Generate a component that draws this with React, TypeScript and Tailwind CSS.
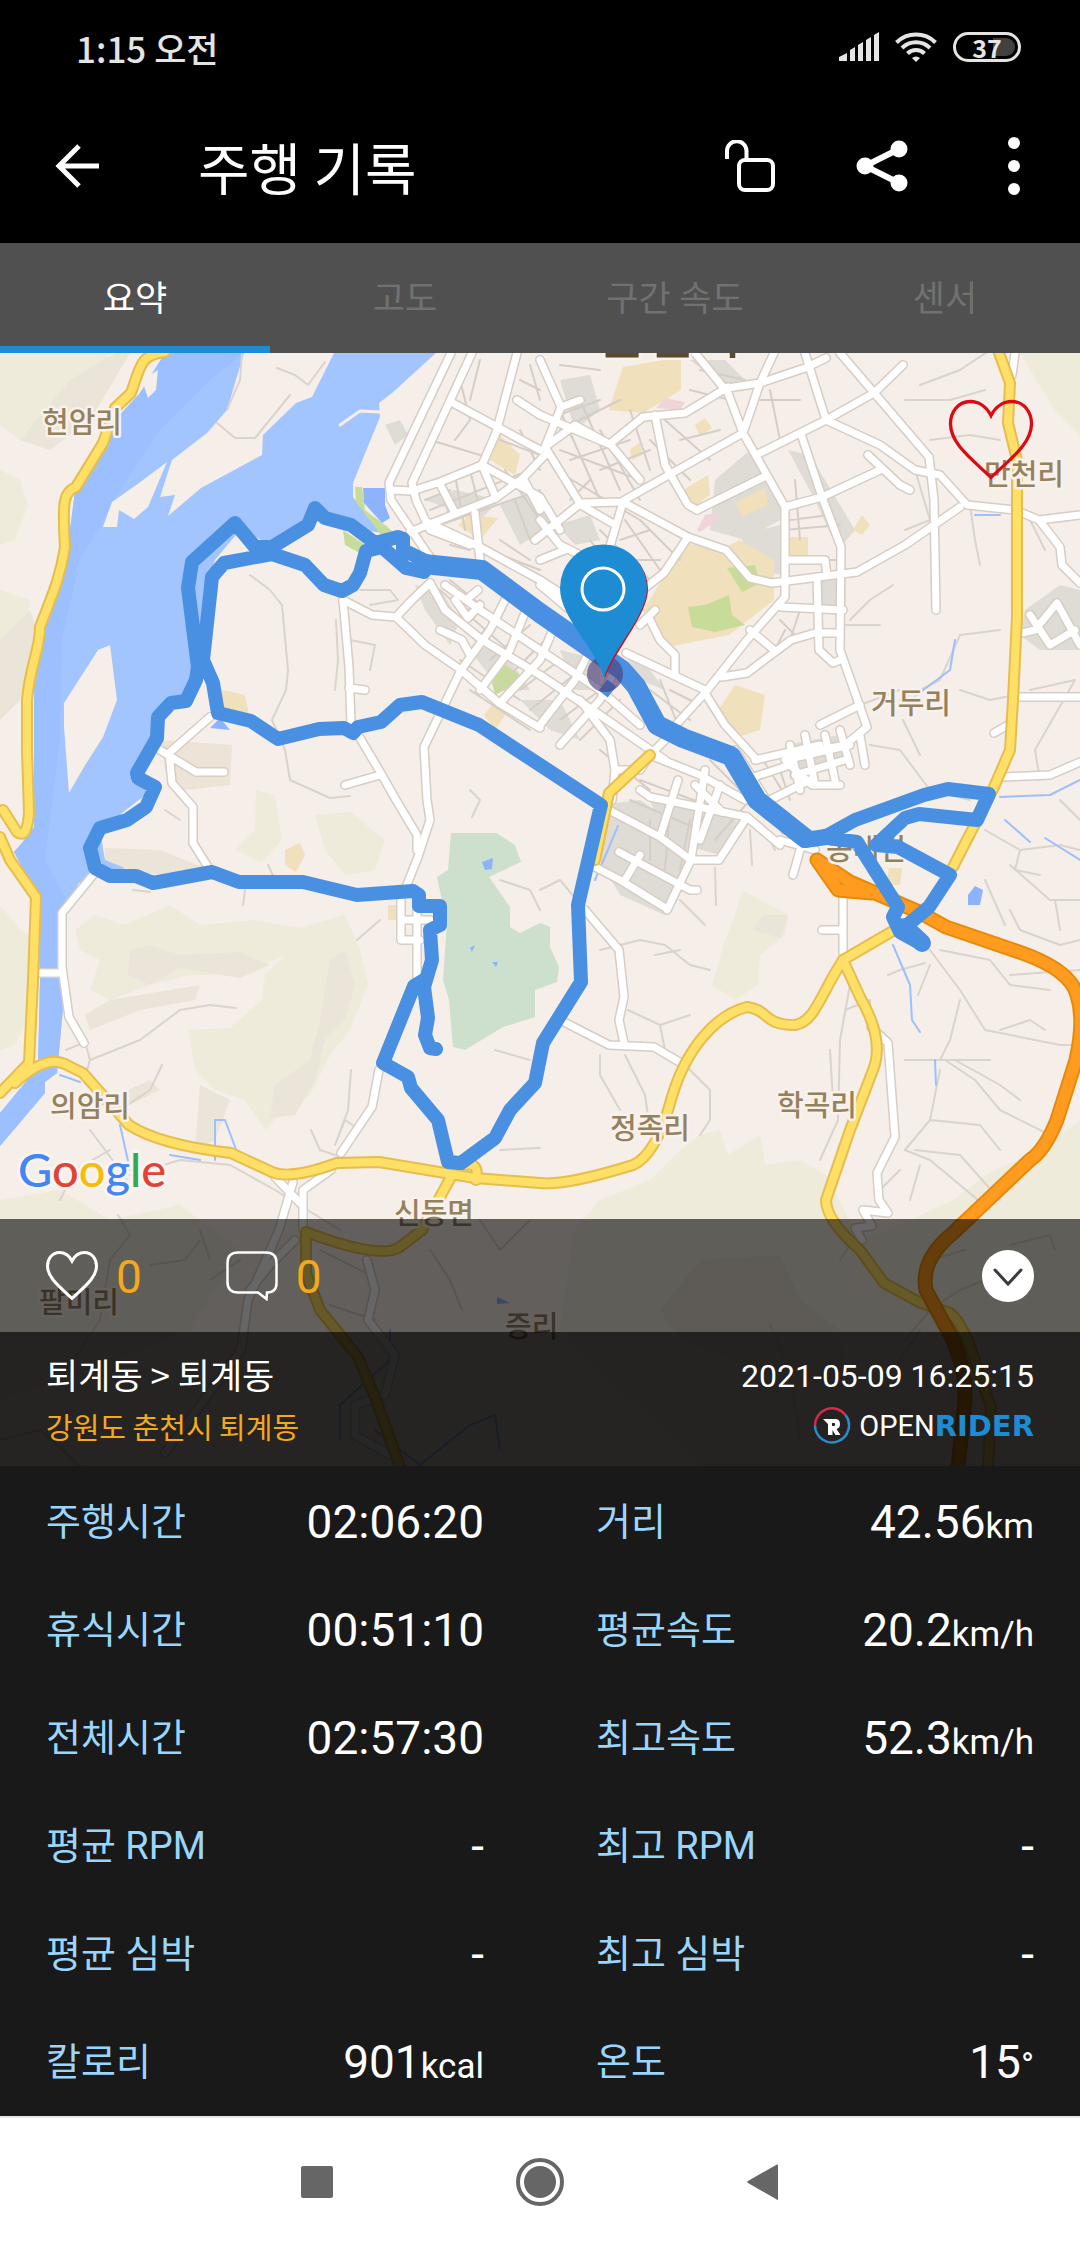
import { useState } from "react";

const tabs = ["요약", "고도", "구간 속도", "센서"];

const stats = [
  { label: "주행시간", value: "02:06:20" },
  { label: "거리", value: "42.56", unit: "km" },
  { label: "휴식시간", value: "00:51:10" },
  { label: "평균속도", value: "20.2", unit: "km/h" },
  { label: "전체시간", value: "02:57:30" },
  { label: "최고속도", value: "52.3", unit: "km/h" },
  { label: "평균 RPM", value: "-" },
  { label: "최고 RPM", value: "-" },
  { label: "평균 심박", value: "-" },
  { label: "최고 심박", value: "-" },
  { label: "칼로리", value: "901", unit: "kcal" },
  { label: "온도", value: "15", unit: "°" },
];

const places = [
  { name: "현암리", x: 42, y: 433 },
  { name: "만천리", x: 984, y: 485 },
  { name: "거두리", x: 871, y: 714 },
  { name: "동내면", x: 826, y: 860 },
  { name: "의암리", x: 50, y: 1117 },
  { name: "신동면", x: 394, y: 1224 },
  { name: "정족리", x: 610, y: 1139 },
  { name: "학곡리", x: 777, y: 1116 },
  { name: "팔미리", x: 39, y: 1313 },
  { name: "증리", x: 505, y: 1337 },
];

const hills = [
  "M0 353H110L85 400 60 430 20 440 0 425Z",
  "M0 470 20 480 28 505 15 540 0 545Z",
  "M0 590 30 600 20 650 5 680 0 690Z",
  "M75 930 95 915 125 925 170 905 200 925 255 920 300 928 345 915 360 950 368 985 350 1030 330 1055 310 1095 285 1110 265 1130 245 1100 215 1090 195 1070 188 1030 230 1028 262 1000 265 975 285 955 240 975 190 975 150 985 110 1000 90 990 100 960 80 950Z",
  "M315 815 350 812 385 840 375 870 345 875 325 850Z",
  "M256 790 275 795 282 840 262 862 235 850 255 830Z",
  "M0 905 20 930 38 940 35 1000 15 1045 0 1050Z",
  "M742 890 788 915 785 935 760 955 758 985 735 1000 712 985 725 940 735 915Z",
  "M1020 353H1080V435L1055 410Z",
  "M574 1230 600 1200 650 1180 680 1150 700 1135 720 1130 728 1155 760 1135 765 1165 800 1160 826 1175 860 1240 900 1225 953 1200 990 1172 1040 1150 1080 1120V1466H700L560 1330Z",
  "M0 1200 60 1190 110 1220 180 1205 240 1250 190 1330 90 1370 0 1400Z",
];

const ridges = [
  "M130 950 150 945 180 955 240 952 270 965 240 978 180 968 150 985 128 975Z",
  "M330 960 345 950 355 985 345 1020 325 1040 315 1080 295 1115 270 1118 275 1085 310 1060 320 1020Z",
  "M105 848 160 850 205 868 190 880 140 872 105 862Z",
  "M85 1015 110 1000 200 985 195 1000 140 1010 90 1030Z",
  "M95 1105 150 1080 160 1090 120 1110Z",
  "M200 1085 230 1100 215 1140 195 1150Z",
  "M763 915 788 915 780 938 752 930Z",
  "M660 1310 700 1260 780 1255 800 1300 840 1330 850 1380 760 1370 680 1340Z",
  "M0 640 30 610 40 640 20 700 0 720Z",
  "M20 440 70 380 115 353 130 353 90 420 50 450Z",
];

const blocks = [
  "M425 500 455 490 500 500 480 520Z",
  "M500 505 540 490 560 520 520 545Z",
  "M415 585 440 590 460 620 450 645 425 610Z",
  "M470 650 500 645 530 690 500 690Z",
  "M520 700 560 700 580 740 550 730Z",
  "M560 650 600 660 600 690 575 690Z",
  "M625 655 650 670 665 690 640 680Z",
  "M600 805 640 800 700 840 665 915 620 895 600 860Z",
  "M650 800 690 800 745 825 720 855 665 840Z",
  "M715 480 750 450 780 500 780 520 745 540 710 530Z",
  "M740 535 780 525 782 575 755 570Z",
  "M788 450 810 455 855 530 838 550 815 500Z",
  "M820 580 836 580 838 610 822 610Z",
  "M690 360 725 360 750 385 730 390Z",
  "M1025 610 1060 585 1080 590 1080 650 1040 650 1020 635Z",
  "M560 380 590 375 600 410 575 430Z",
  "M557 525 590 515 600 540 575 545Z",
  "M785 745 840 735 850 760 790 780Z",
  "M385 425 400 420 408 435 395 445Z",
];

const sands = [
  "M490 460 500 435 520 455 515 475Z",
  "M458 525 470 515 498 518 480 540Z",
  "M609 410 623 367 681 357 681 390 643 413Z",
  "M685 543 720 550 740 540 774 560 774 600 729 635 667 647 643 610 665 575Z",
  "M683 490 708 475 710 495 690 510Z",
  "M736 502 765 488 768 505 742 517Z",
  "M790 537H808V560H790Z",
  "M715 715 735 685 765 695 760 730 735 738Z",
  "M853 530 862 515 870 525 862 535Z",
  "M484 715 500 695 505 715 495 730Z",
  "M695 425 705 418 712 428 700 436Z",
  "M630 450 640 442 642 455 632 460Z",
  "M222 690 245 695 250 720 222 712Z",
  "M285 850 300 843 305 855 296 872 285 865Z",
  "M889 868 902 868 900 885 886 885Z",
  "M388 905H398V920H388Z",
];

const greens = [
  "M688 607 705 605 729 595 732 615 745 625 715 632 692 627Z",
  "M727 568 755 565 760 583 742 592Z",
  "M355 487 362 487 365 510 385 525 397 535 385 540 356 502Z",
  "M490 675 505 665 520 675 508 688 495 695Z",
  "M343 530 365 545 360 553 345 545Z",
];

// rural lanes, drawn as thin grey strokes
const lanes = [
  "M242 353 245 370 227 410 M277 368 295 375 308 385 325 365 M217 423 235 438 255 440 290 400 M308 355 330 360",
  "M250 575 270 590 282 605 288 670 286 690 272 720 285 750 290 780 330 798 350 796",
  "M336 620 338 660 335 690 M350 640 375 645 370 670 M360 590 390 590 398 600 370 605",
  "M165 810 180 820 M133 890 150 892 M268 865 275 880 M245 890 243 905 M357 940 380 920",
  "M66 1050 85 1042 90 1060 140 1040 180 1010 210 1005 236 1008 M90 1060 84 1080 120 1110 150 1090 162 1065",
  "M90 1130 120 1170 130 1185 M110 1150 75 1170 60 1200 M130 1175 180 1160 230 1165 275 1190 340 1230",
  "M311 1130 320 1150 350 1160 M351 1070 348 1110 335 1145 345 1120 360 1130",
  "M470 790 480 800 472 817 M500 880 530 890 540 910 M495 1050 530 1060 M500 1150 540 1148",
  "M600 950 640 940 665 945 690 965 710 970 M655 955 680 950 M628 1010 660 1025 665 1050 M660 1025 690 1015",
  "M600 1055 600 1075 620 1110 M625 1055 645 1095 650 1130 M685 1065 710 1090 710 1120 700 1135",
  "M540 890 560 880 585 910 M715 868 716 905 M680 900 705 925 M750 830 752 865 M770 840 775 850",
  "M850 985 840 1040 838 1120 820 1160 M830 1050 833 1100 M845 1010 870 1000 870 1020 M888 975 900 970 925 963",
  "M930 950 960 990 985 1030 1060 1045 1080 1045 M960 1000 950 1040 940 1060 M905 1060 945 1060 990 1060 M930 965 918 995",
  "M940 950 990 960 1010 985 1050 990 M1010 975 1080 970 M1000 1030 1030 1020 1045 1030",
  "M945 1060 975 1080 1000 1110 1050 1135 M940 1070 930 1120 980 1125 1000 1150 M930 1120 905 1150 M955 1060 1000 1085 1020 1100",
  "M905 1150 930 1160 990 1210 M915 1150 960 1155 1000 1200 M900 1170 880 1190 M920 1165 910 1200",
  "M985 830 1020 850 1060 845 1080 850 M1060 800 1080 820 M1020 850 1015 870 1040 875 M1010 865 1050 900 1080 900",
  "M1010 910 1020 930 1060 945 1080 940 M1055 900 1060 930 M985 880 1005 925",
  "M920 385 960 370 990 350 M905 400 950 400 985 390 M930 440 970 435 1000 440 M915 470 930 520 905 530",
  "M850 620 870 600 893 585 M845 625 880 625 M860 705 900 690 M870 745 900 750 930 790 970 800 M903 720 920 755",
  "M1000 630 960 635 940 680 900 700 M1030 690 1075 680 1035 750 1040 780 M960 690 990 700 1015 695",
  "M970 505 975 540 980 565 M1030 520 1045 550",
  "M430 1250 450 1280 462 1310 M480 1220 500 1250 530 1220 M200 1230 210 1260 M150 1265 185 1260 200 1240",
  "M118 1215 130 1235 110 1260 100 1320 60 1380 M210 1280 240 1260 M320 1250 370 1275 M330 1305 375 1320",
  "M905 1340 930 1310 960 1290 985 1280 M840 1260 850 1245 M920 1290 930 1260 965 1250 M1010 1245 1050 1235 1055 1250",
  "M770 1325 790 1370 800 1440 M900 1360 920 1330 M0 1440 40 1430 80 1466",
];

const cityLanes = [
  "M430 510 530 470 M440 525 540 490 M450 535 540 570 M455 475 465 530 M440 480 450 520 M470 470 480 510",
  "M425 500 450 490 M505 470 540 520 M515 500 530 540 M500 540 530 560 M450 545 470 550 M520 380 540 390 M530 365 540 400",
  "M460 380 470 420 455 440 M480 360 470 400 M430 440 480 455 M500 440 540 455 M520 430 540 470",
  "M560 450 640 480 M555 470 640 520 M560 410 600 500 M580 400 620 490 M600 430 640 500 M545 420 600 400",
  "M560 430 620 400 M570 460 630 440 M600 470 650 450 M590 480 570 500 M630 410 650 470 M560 365 600 370",
  "M640 520 680 560 M625 520 660 570 M600 530 650 580 M650 440 690 480 M665 420 710 460 M680 440 720 430",
  "M620 540 650 530 M610 560 660 560 M590 540 620 580 M610 590 640 570 M590 560 610 600",
  "M700 370 745 380 M690 390 730 400 M760 400 800 400 M770 390 780 440 M790 520 830 515 M795 480 800 540 M785 530 840 525",
  "M440 590 520 660 M450 580 530 645 M455 620 480 600 M475 640 505 610 M490 660 530 625 M505 680 545 640",
  "M520 690 560 660 M530 710 580 670 M460 660 520 700 M470 690 530 730 M560 720 600 690 M580 740 620 700",
  "M600 750 650 790 M615 730 670 760 M630 800 700 830 M640 780 720 810 M650 820 650 860 M670 810 665 870 M690 820 680 870",
  "M700 770 745 800 M710 760 740 790 M715 840 750 800 M780 620 800 640 M785 630 770 660 M800 610 790 640 M840 560 810 560",
  "M650 690 690 720 M660 680 680 730 M670 690 700 705 M640 690 670 730 M745 760 770 800 M760 755 785 795 M780 770 790 800",
];

const streets = [
  "M451 353 389 483 391 500 427 553 440 570",
  "M472 353 412 483 416 500 430 530 470 545",
  "M517 353 496 433 482 465 440 482 412 491 391 490",
  "M451 402 540 450 M517 400 540 415 M482 465 496 498 M440 484 455 513",
  "M410 532 440 520 496 498 523 478 545 455",
  "M427 522 480 547 540 580 590 612 M475 513 480 560 M482 465 540 497 560 530 M523 478 540 510",
  "M540 360 561 407 545 447 581 505 612 523 M545 447 575 425 611 445 640 480 M540 415 611 445",
  "M535 540 581 503 621 502 743 433 728 393 695 353 M561 407 580 400",
  "M743 433 760 383 774 353 M728 388 760 383 805 368 826 358",
  "M611 443 643 417 685 413 728 387 M655 415 665 465 688 505 697 510",
  "M743 433 785 507 785 597 747 640 705 693 674 727",
  "M805 353 826 420 880 445 915 470 940 475 967 505 1015 510",
  "M1015 510 1039 520 1060 547 1062 565 1080 583 M1039 520 1080 515",
  "M840 353 929 457 934 500 936 610",
  "M760 453 826 420 874 393 903 365",
  "M802 437 822 497 841 547 840 650 867 727 845 745 820 750",
  "M623 502 688 537 726 550 750 578 772 583 857 572 905 545 960 507",
  "M688 537 664 573 626 603 M623 502 603 570 M697 510 764 477 M785 507 822 497 880 470",
  "M781 607 843 610 M817 577 819 650 833 663 840 660 M785 560 825 560 827 575",
  "M750 630 774 650 M835 633 815 633 791 640 747 673 722 677",
  "M705 693 725 725 757 760 M626 653 705 690 M650 620 660 640 675 655 675 675 M640 625 655 610",
  "M343 600 349 667 351 723 379 770 396 800 417 835 417 850",
  "M343 600 372 615 396 617 412 600 430 583 M396 617 425 645 461 670 499 703 540 728",
  "M349 688 365 690 M345 785 380 775",
  "M461 670 424 747 427 800 430 820 418 857 406 887",
  "M417 893 417 980 M401 895V940H420 M401 920H430",
  "M379 1070 372 1107 341 1153 M331 1170 303 1190 303 1230",
  "M275 1177 300 1203 M293 1182 279 1230 248 1300 241 1350 165 1453",
  "M295 1240 270 1265 250 1290 M367 1260 375 1290 368 1320 395 1355 385 1395 355 1405 355 1435 390 1455",
  "M210 717 169 753 172 783 193 807 193 843 208 867 M160 750 196 772 224 772",
  "M93 875 62 913 62 967 69 1017 84 1043 M38 973H62",
  "M430 583 445 610 482 640 540 675 600 715 665 760",
  "M445 585 480 610 540 650 600 690 640 725",
  "M455 600 468 618 480 605 M440 630 462 640 470 655 M466 600 478 590",
  "M461 670 490 630 510 590 M480 690 510 650 530 600 M500 703 540 660 555 625 M540 725 575 680 590 650",
  "M560 745 600 700 615 670 M580 700 610 740 615 770 640 770 650 755 665 740 M615 770 612 800",
  "M540 520 560 545 590 560 M540 560 565 550 M590 612 620 590 M540 585 570 610",
  "M650 755 700 775 745 800 M678 780 660 837 M705 770 691 860 M609 810 660 837 691 860 719 860 747 817",
  "M650 797 747 817 780 845 M640 790 650 797 M691 860 667 910 M595 867 620 880 664 907 M619 852 690 890 697 890",
  "M640 855 625 880 M780 840 815 850 M800 850 793 875 M695 785 722 812 M720 785 700 840",
  "M735 750 785 830 M755 760 820 745 M770 800 810 780 M745 780 790 765 812 785 840 785",
  "M790 745 800 790 M805 735 815 785 M825 735 835 780 M840 730 850 765 M785 760 850 745 M795 775 845 760 M820 725 860 705 M860 735 865 765",
  "M843 897 843 953 M822 930 843 930",
  "M871 1027 888 1043 895 1137 877 1173 879 1200 888 1213 863 1210 872 1226 855 1228 862 1240",
  "M585 910 619 950 624 997 619 1020 624 1043 M564 1022 609 1045 654 1047 681 1063",
  "M1022 633 1035 630 1057 603 1080 645 M1030 615 1050 645 1075 630",
  "M1019 697H1080 M1003 777 1050 775 1080 762 M994 733 1008 725",
  "M1015 353 1012 375 M868 455 900 485 910 490",
];

const yellowRoads = [
  "M165 352C140 355 141 365 131 393L115 408 103 443 76 487C64 492 62 500 65 547C60 580 50 600 40 627C40 650 30 665 27 700V750L29 813Q27 840 17 832L3 810",
  "M0 837 10 860 36 897 33 980 29 1063 0 1093",
  "M15 1083Q45 1055 65 1064L83 1073 129 1125Q160 1145 231 1153L272 1172Q290 1180 337 1163L379 1162 475 1178 540 1183Q565 1186 633 1165 656 1155 671 1100C685 1050 715 1015 747 1007 770 1010 762 1025 795 1025 815 1022 820 995 843 960L891 932",
  "M843 960 860 997Q885 1040 873 1070L850 1130 826 1200Q826 1220 860 1250L884 1283 919 1302 950 1313Q965 1325 977 1367L991 1407 988 1467",
  "M998 350 1010 383 1008 423 1017 460V617L1013 700 1010 750 994 787 953 867",
  "M650 755 609 793 595 860",
  "M476 1180Q480 1162 465 1165M451 1177 422 1230 400 1247Q380 1260 306 1232V1273L320 1310 358 1357 375 1397 400 1467",
];

const orangeRoad =
  "M817 860 838 890 871 893 M817 860 850 882 919 912 946 927 1022 953Q1070 970 1077 995 1085 1020 1076 1060L1057 1120Q1045 1150 1030 1160L953 1233Q920 1260 926 1290L953 1340Q966 1370 965 1400L958 1467";

const trackThin =
  "M403 539 398 537 375 543 351 525 325 518 315 508 308 525 272 547 255 547 235 523 192 562 188 588 198 667 196 680 186 701 171 703 158 717 157 738 137 773 138 778 155 787 146 807 127 820 100 828 90 848 95 868 110 876 136 876 153 883 212 872 239 882 303 882 357 895 413 891 419 895 419 906 440 906 440 925 430 930 432 960 424 987 428 1018 425 1035 430 1048 436 1049" +
  "M424 980 414 986 383 1063 408 1077 411 1088 438 1120 448 1162 461 1163 495 1138 510 1110 535 1083 543 1043 581 982 578 905 601 805 479 725 422 702 400 705 381 722 358 727 353 733 344 728 319 729 278 739 251 721 218 713 213 683 203 660 212 577 224 563 272 554 305 565 324 585 342 591 353 585 360 573 366 551 382 547" +
  "M820 838 828 835 855 820 924 795 948 789 989 794 977 820 919 814 905 818 876 845 898 847 950 875 929 907 905 927 M828 838 857 842 898 907 893 917 900 932 920 943";

const trackWide = "M424 564 482 570 540 613 622 670 636 686 657 725 683 738 731 756 757 800 805 838";

function RideMap() {
  return (
    <svg
      viewBox="0 353 1080 1113"
      className="block w-full"
      role="img"
      aria-label="주행 경로 지도"
      fill="none"
      strokeLinejoin="round"
      strokeLinecap="round"
    >
      <rect y="353" width="1080" height="1113" fill="#f6eee8" />
      <g fill="#efebdb">
        {hills.map((d) => (
          <path key={d} d={d} />
        ))}
      </g>
      <g fill="#ebe4d8">
        {ridges.map((d) => (
          <path key={d} d={d} />
        ))}
      </g>
      <path
        fill="#ede3d6"
        d="M160 740 232 745 230 785 185 790 165 770Z"
      />

      {/* river and islands */}
      <path
        fill="#a3c5ff"
        d="M165 353 140 393 115 420 75 490 73 507 69 537 52 590 44 640 34 683V827L22 843 14 852 38 897 40 980 38 1067 0 1113V1146L45 1093V1082L57 1073 64 997 57 947 59 920 79 883 125 868 105 860 100 830 148 793 137 773 157 738 158 717 186 701 200 670 203 600 215 560 240 530 272 545 310 520 344 527 382 533 353 497V483L380 417 379 403 392 393 436 353Z"
      />
      <path
        fill="#9cc0ff"
        d="M165 353 140 393 115 420 75 490 73 507 69 537 52 590 44 640 34 683V827L22 843 14 852 38 897 40 980 38 1067 0 1113V1146L45 1093V1082L57 1073 64 997 57 947 59 920 66 900 45 860 60 740 62 640 80 560 120 490 160 430 210 380 244 353Z"
      />
      <g fill="#f6eee8">
        <path d="M244 353 227 410 207 433 172 460 160 497 175 495 168 516 201 488 262 455 263 435 296 403 312 397 334 353Z" />
        <path d="M167 462 139 483 112 502 103 527H117L119 510 134 519 148 507Z" />
        <path d="M110 645 98 650 64 703V727L69 793 84 767 103 737 117 700Z" />
        <path d="M142 380 158 370 156 390 148 398Z" />
      </g>
      <path d="M340 425 360 411 380 412" stroke="#f6eee8" strokeWidth="3" />
      <path d="M242 353 240 380 227 410 M277 368 295 375 308 385 325 362 M217 423 235 438 255 438 290 395" stroke="#d9d4cc" strokeWidth="2" />

      <g fill="#dfdbd5">
        {blocks.map((d) => (
          <path key={d} d={d} />
        ))}
      </g>
      <g fill="#f0e0bb">
        {sands.map((d) => (
          <path key={d} d={d} />
        ))}
      </g>
      <path fill="#f0d4da" d="M697 530 705 515 720 512 715 522 700 532ZM656 408 665 398 685 402 680 410Z" />
      <g fill="#c7dc98">
        {greens.map((d) => (
          <path key={d} d={d} />
        ))}
      </g>
      <g fill="#8db3ff">
        <path d="M363 488H385V505L390 518 382 523 364 503Z" />
        <path d="M210 728 220 718 230 730Z" />
        <path d="M968 895 975 886 983 890 980 905 968 905Z" />
        <path d="M497 1297 510 1303 497 1304Z" />
      </g>
      <path
        fill="#cddfcd"
        d="M451 833 496 833 515 845 521 862 489 877 510 907V927L520 933 540 923 550 927V947L559 967 557 982 535 990 535 1017 503 1027 465 1050 453 1047 449 1000 443 980 447 923 437 877 448 870Z"
      />
      <path fill="#8db3ff" d="M482 862 493 858 492 869 485 870ZM470 948 475 945 472 952ZM492 962 498 962 496 967Z" />

      <g stroke="#d9d4cc" strokeWidth="2">
        {lanes.slice(1).map((d) => (
          <path key={d} d={d} />
        ))}
      </g>
      <g stroke="#d5cec7" strokeWidth="2">
        {cityLanes.map((d) => (
          <path key={d} d={d} />
        ))}
      </g>
      <path
        stroke="#9dc0fb"
        strokeWidth="2"
        d="M1000 797 1050 795 1080 780 M1005 820 1030 842 M1045 838 1080 860 M893 945 910 985 912 1020 920 1032 M935 1060 936 1085 M215 1160 215 1120 225 1120 240 1160 M60 1075 80 1082 M120 1125 130 1170 M955 640 950 670 910 700 M975 515 1000 515 M618 826 595 880 M170 1155 200 1160 M390 1330 390 1360 340 1405 340 1440 M375 1430 420 1465 470 1425 495 1415 500 1450"
      />

      <g stroke="#d6cdc4" strokeWidth="10">
        {streets.map((d) => (
          <path key={d} d={d} />
        ))}
      </g>
      <g stroke="#ffffff" strokeWidth="7">
        {streets.map((d) => (
          <path key={d} d={d} />
        ))}
      </g>
      <g stroke="#e6bd4f" strokeWidth="12">
        {yellowRoads.map((d) => (
          <path key={d} d={d} />
        ))}
      </g>
      <g stroke="#ffe066" strokeWidth="8">
        {yellowRoads.map((d) => (
          <path key={d} d={d} />
        ))}
      </g>
      <path d={orangeRoad} stroke="#e58a0c" strokeWidth="15" />
      <path d={orangeRoad} stroke="#ff9c1f" strokeWidth="11" />

      <g
        className="font-['Noto_Sans_CJK_KR',sans-serif] text-[29px] font-medium"
        fill="#94825f"
        stroke="#f8f1ec"
        strokeWidth="5"
        paintOrder="stroke"
      >
        {places.map((place) => (
          <text key={place.name} x={place.x} y={place.y}>
            {place.name}
          </text>
        ))}
        <text x="598" y="354" className="text-[52px]" fill="#5c4a2c">
          춘천시
        </text>
      </g>

      <g stroke="#4a90e2">
        <path d={trackThin} strokeWidth="14" />
        <path d="M382 547 406 568 424 572 M403 539 403 550 430 563" strokeWidth="14" />
        <path d={trackWide} strokeWidth="20" />
        <path d="M805 840 826 837" strokeWidth="16" />
        <path d="M905 927 922 943" strokeWidth="18" />
        <path d="M603 685 612 692" strokeWidth="14" strokeLinecap="butt" />
      </g>

      {/* start and finish pins */}
      <circle cx="605" cy="674" r="18" fill="#4b3f78" fillOpacity="0.65" />
      <path d="M605 678C598 650 563 620 563 589A42 42 0 0 1 648 589C648 615 615 650 605 678Z" fill="#c8141e" />
      <path d="M604 678C596 648 560 618 560 588A43 43 0 0 1 647 588C647 616 612 650 604 678Z" fill="#1d8cd2" />
      <circle cx="603" cy="589" r="21" stroke="#ffffff" strokeWidth="3" />
    </svg>
  );
}

function HeartIcon({ className }: { className: string }) {
  return (
    <svg viewBox="0 0 52 49" className={className} fill="none" stroke="currentColor" aria-hidden="true">
      <path d="M26 10C23 4 18 1.500 13.500 1.500C6 1.500 1.500 8 1.500 15C1.500 27 14 36 26 47.500C38 36 50.500 27 50.500 15C50.500 8 46 1.500 38.500 1.500C34 1.500 29 4 26 10Z" />
    </svg>
  );
}

function StatusBar() {
  return (
    <div className="flex h-[94px] items-center justify-between pr-[59px] pl-[76px] text-[#e4e4e4]">
      <span className="font-['Noto_Sans_CJK_KR',sans-serif] text-[35px] leading-none font-medium">1:15 오전</span>
      <div className="flex items-center gap-4">
        <svg viewBox="0 0 40 30" className="h-[30px] w-10" fill="currentColor" aria-hidden="true">
          <path d="M0 25 8 21V29H0ZM11 18 16 15V29H11ZM19 13 24 10V29H19ZM27 8 32 5V29H27ZM35 3 40 0V29H35Z" />
        </svg>
        <svg viewBox="0 0 42 30" className="h-[30px] w-[42px]" fill="none" stroke="currentColor" strokeWidth="4" aria-hidden="true">
          <path d="M1.500 10.500A28 28 0 0 1 40.500 10.500M7 16A20 20 0 0 1 35 16M12.500 21.500A12 12 0 0 1 29.500 21.500" />
          <path d="M21 30 17 26A6 6 0 0 1 25 26Z" fill="currentColor" stroke="none" />
        </svg>
        <div className="flex h-[30px] w-[68px] rounded-full border-[3px] border-current p-[3px]">
          <div className="flex w-full items-center justify-center rounded-full bg-linear-to-r from-black from-60% to-[#404040] to-60% font-['Noto_Sans_CJK_KR',sans-serif] text-[25px] leading-none font-bold">
            37
          </div>
        </div>
      </div>
    </div>
  );
}

function Toolbar() {
  return (
    <div className="flex h-[149px] items-center pr-[60px] pb-[5px] pl-[55px] text-white">
      <button type="button" aria-label="뒤로">
        <svg viewBox="0 0 44 44" className="size-11" fill="none" stroke="currentColor" strokeWidth="5" aria-hidden="true">
          <path d="M44 22H4M24 2 4 22 24 42" />
        </svg>
      </button>
      <h1 className="ml-[99px] flex-1 font-['Noto_Sans_CJK_KR',sans-serif] text-[56px] leading-none">주행 기록</h1>
      <button type="button" aria-label="잠금 해제">
        <svg viewBox="0 0 50 52" className="h-[52px] w-[50px]" fill="none" stroke="currentColor" strokeWidth="4" aria-hidden="true">
          <rect x="14" y="20" width="34" height="30" rx="6" />
          <path d="M2 19V11A9.500 9.500 0 0 1 21.500 11V20" />
        </svg>
      </button>
      <button type="button" aria-label="공유" className="ml-[81px]">
        <svg viewBox="0 0 52 52" className="size-[52px]" fill="currentColor" aria-hidden="true">
          <path d="M43 9 9 26 43 43" fill="none" stroke="currentColor" strokeWidth="6" />
          <circle cx="9" cy="26" r="8.500" />
          <circle cx="43" cy="9" r="8.500" />
          <circle cx="43" cy="43" r="8.500" />
        </svg>
      </button>
      <button type="button" aria-label="더보기" className="ml-[100px]">
        <svg viewBox="0 0 12 58" className="h-[58px] w-3" fill="currentColor" aria-hidden="true">
          <circle cx="6" cy="6" r="6" />
          <circle cx="6" cy="29" r="6" />
          <circle cx="6" cy="52" r="6" />
        </svg>
      </button>
    </div>
  );
}

function BrandLogo() {
  return (
    <div className="flex items-center leading-none">
      <svg viewBox="0 0 38 38" className="mr-2 size-[38px]" fill="none" aria-hidden="true">
        <path d="M2 19A17 17 0 0 1 32.500 8" stroke="#d42a4c" strokeWidth="2.500" />
        <path d="M32.500 8A17 17 0 1 1 2 19" stroke="#2a8ccb" strokeWidth="2.500" />
        <path d="M10 12H22Q27 12 27 17 27 21 23.500 22L27.500 28H22.500L19.500 23V28H15V17Z" fill="#ffffff" />
        <path d="M19 16H21.500Q23 17 21.500 19H19Z" fill="#262522" />
      </svg>
      <span className="font-[Roboto,sans-serif] text-[29px] text-white">OPEN</span>
      <span className="font-['DejaVu_Sans',sans-serif] text-[29px] font-bold text-[#1d8cd2]">RIDER</span>
    </div>
  );
}

export default function App() {
  const [activeTab, setActiveTab] = useState("요약");

  return (
    <div className="min-h-screen bg-[#191919] font-[Roboto,'Noto_Sans_CJK_KR',sans-serif] text-white">
      <header className="bg-black">
        <StatusBar />
        <Toolbar />
      </header>

      <div role="tablist" className="grid h-[110px] grid-cols-4 bg-[#505050]">
        {tabs.map((tab) => (
          <button
            key={tab}
            type="button"
            role="tab"
            aria-selected={activeTab === tab}
            onClick={() => setActiveTab(tab)}
            className={`border-b-[7px] pt-2.5 text-[35px] leading-none ${
              activeTab === tab ? "border-[#1d8cd2] text-white" : "border-transparent text-[#717171]"
            }`}
          >
            {tab}
          </button>
        ))}
      </div>

      <section className="relative">
        <RideMap />
        <button type="button" aria-label="즐겨찾기" className="absolute top-[46px] right-[46px] text-[#dc0a14]">
          <HeartIcon className="h-[81px] w-[86px] stroke-2" />
        </button>

        <div className="absolute inset-x-0 bottom-0">
          <div className="mb-5 ml-[18px] w-fit font-[Lato,sans-serif] text-[47px] leading-[60px] font-medium [-webkit-text-stroke:6px_#f9f4f0] [paint-order:stroke]">
            <span className="text-[#4285f4]">G</span>
            <span className="text-[#e04438]">o</span>
            <span className="text-[#f6bb0c]">o</span>
            <span className="text-[#4285f4]">g</span>
            <span className="text-[#34a853]">l</span>
            <span className="text-[#e04438]">e</span>
          </div>

          <div className="flex h-[113px] items-center bg-black/60 px-[46px] text-[46px] leading-none">
            <button type="button" aria-label="좋아요" className="flex items-center gap-[18px]">
              <HeartIcon className="h-[49px] w-[52px] stroke-[3px]" />
              <span className="pt-0.5 text-[#f5a81c]">0</span>
            </button>
            <button type="button" aria-label="댓글" className="ml-[84px] flex items-center gap-[18px]">
              <svg viewBox="0 0 52 50" className="h-[50px] w-[52px]" fill="none" stroke="currentColor" strokeWidth="2.500" aria-hidden="true">
                <path d="M12 1.500H40Q50.500 1.500 50.500 12V32Q50.500 41.500 41 41.500L40.500 48 32 41.500H12Q1.500 41.500 1.500 31V12Q1.500 1.500 12 1.500Z" />
              </svg>
              <span className="pt-0.5 text-[#f5a81c]">0</span>
            </button>
            <button type="button" aria-label="펼치기" className="ml-auto">
              <svg viewBox="0 0 52 52" className="size-[52px]" aria-hidden="true">
                <circle cx="26" cy="26" r="26" fill="#ffffff" />
                <path d="M13 20 26 34 39 20" fill="none" stroke="#3c3c3c" strokeWidth="3" strokeLinecap="round" />
              </svg>
            </button>
          </div>

          <div className="flex h-[134px] justify-between bg-black/85 px-[46px] pt-[22px]">
            <div className="font-['Noto_Sans_CJK_KR',sans-serif]">
              <p className="text-[35px] leading-10">퇴계동 &gt; 퇴계동</p>
              <p className="mt-3 text-[29px] leading-10 text-[#f5a81c]">강원도 춘천시 퇴계동</p>
            </div>
            <div className="flex flex-col items-end">
              <time className="text-[32px] leading-[44px]">2021-05-09 16:25:15</time>
              <div className="mt-[9px]">
                <BrandLogo />
              </div>
            </div>
          </div>
        </div>
      </section>

      <dl className="grid grid-cols-2 gap-x-28 px-[46px] py-px">
        {stats.map((stat) => (
          <div key={stat.label} className="flex h-[108px] items-center justify-between">
            <dt className="pt-0.5 text-[38px] leading-none text-[#9bd5fb]">{stat.label}</dt>
            <dd className="pt-0.5 text-[46px] leading-none">
              {stat.value}
              {stat.unit && <span className="text-[35px]">{stat.unit}</span>}
            </dd>
          </div>
        ))}
      </dl>

      <nav className="flex h-[130px] items-center justify-center gap-[183px] border-t-2 border-[#e6e6e6] bg-white text-[#666666]">
        <button type="button" aria-label="최근 앱">
          <svg viewBox="0 0 32 32" className="size-8" fill="currentColor" aria-hidden="true">
            <rect width="32" height="32" rx="2" />
          </svg>
        </button>
        <button type="button" aria-label="홈">
          <svg viewBox="0 0 48 48" className="size-12" fill="currentColor" aria-hidden="true">
            <circle cx="24" cy="24" r="22" fill="none" stroke="currentColor" strokeWidth="4" />
            <circle cx="24" cy="24" r="16" />
          </svg>
        </button>
        <button type="button" aria-label="이전">
          <svg viewBox="0 0 32 36" className="h-9 w-8" fill="currentColor" aria-hidden="true">
            <path d="M31 1V35Q31 37 29 35L1 19Q-.500 18 1 17L29 1Q31 0 31 1Z" />
          </svg>
        </button>
      </nav>
    </div>
  );
}
